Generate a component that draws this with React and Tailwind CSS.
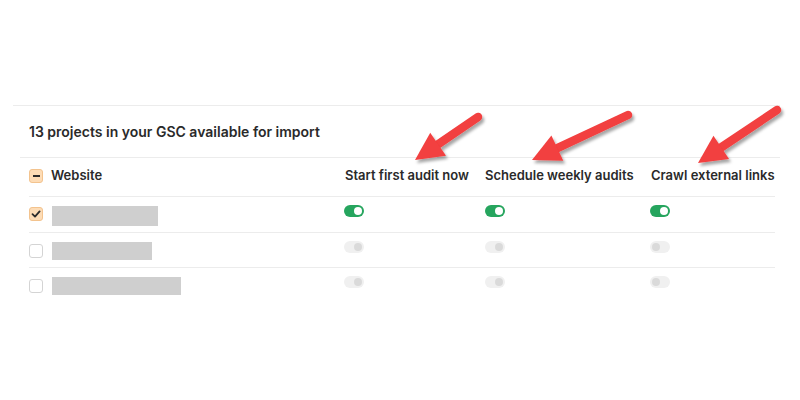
import React from "react";

function Toggle({ on, knobRight }) {
  if (on) {
    return (
      <div className="w-[20px] h-[12px] rounded-full bg-[#26a55e] flex items-center justify-end pr-[2px]">
        <div className="w-[8px] h-[8px] rounded-full bg-white" />
      </div>
    );
  }
  return (
    <div className={"w-[20px] h-[12px] rounded-full bg-[#f0f0f0] flex items-center px-[2px] " + (knobRight ? "justify-end" : "justify-start")}>
      <div className="w-[8px] h-[8px] rounded-full bg-[#dadada]" />
    </div>
  );
}

function Check({ state }) {
  if (state === "checked") {
    return (
      <div className="w-[14px] h-[14px] rounded-[3px] bg-[#fddcb6] border border-[#f3c38e] flex items-center justify-center">
        <svg width="10" height="10" viewBox="0 0 10 10">
          <path d="M1.5 5.2 L4 7.6 L8.6 2.4" fill="none" stroke="#2b2b2b" strokeWidth="1.8" strokeLinecap="round" strokeLinejoin="round" />
        </svg>
      </div>
    );
  }
  if (state === "indeterminate") {
    return (
      <div className="w-[14px] h-[14px] rounded-[3px] bg-[#fddcb6] border border-[#f3c38e] flex items-center justify-center">
        <div className="w-[7px] h-[2px] bg-[#2b2b2b]" />
      </div>
    );
  }
  return <div className="w-[14px] h-[14px] rounded-[3px] bg-white border border-[#d4d4d4]" />;
}

function arrowPoints(tail, tip, headLen, headHalf) {
  const dx = tip[0] - tail[0];
  const dy = tip[1] - tail[1];
  const len = Math.hypot(dx, dy);
  const ux = dx / len, uy = dy / len;
  const nx = -uy, ny = ux;
  const bx = tip[0] - ux * headLen, by = tip[1] - uy * headLen;
  return {
    base: [bx, by],
    poly: `${tip[0]},${tip[1]} ${bx + nx * headHalf},${by + ny * headHalf} ${bx - nx * headHalf},${by - ny * headHalf}`,
  };
}

const arrows = [
  { tail: [478, 117], tip: [415, 160] },
  { tail: [628, 115], tip: [532, 160] },
  { tail: [777, 110], tip: [698, 163] },
];

const rows = [
  { check: "checked", w: "w-[106px]", h: "h-[20px]", on: true },
  { check: "none", w: "w-[100px]", h: "h-[18px]", on: false },
  { check: "none", w: "w-[129px]", h: "h-[18px]", on: false },
];

export default function App() {
  return (
    <div className="relative w-[800px] h-[400px] bg-white overflow-hidden text-[#2a2a2a]" style={{ fontFamily: "Inter, 'Noto Sans', sans-serif" }}>
      <div className="pt-[105px] pl-[13px]">
        <div className="w-[767px] border-t border-[#ececec]">
          <div className="h-[51px] flex items-center pl-[16px] text-[14px] font-semibold">
            13 projects in your GSC available for import
          </div>
          <div className="ml-[7px] border-t border-[#ececec]">
            <div className="h-[39px] pb-[3px] ml-[9px] mr-[5px] grid grid-cols-[315px_141px_165px_1fr] items-center border-b border-[#ececec] text-[13px] font-semibold">
              <div className="flex items-center gap-[8px]">
                <Check state="indeterminate" />
                <span>Website</span>
              </div>
              <div className="pl-[1px]">Start first audit now</div>
              <div>Schedule weekly audits</div>
              <div className="pl-[1px]">Crawl external links</div>
            </div>
            {rows.map((r, i) => (
              <div
                key={i}
                className={"ml-[9px] mr-[5px] h-[35.5px] grid grid-cols-[315px_141px_165px_1fr] items-start " + (i < 2 ? "border-b border-[#ececec]" : "")}
              >
                <div className="flex items-start gap-[9px] pt-[9px]">
                  <div className={i === 0 ? "pt-[1px]" : "pt-[2px]"}>
                    <Check state={r.check} />
                  </div>
                  <div className={r.w + " " + r.h + " bg-[#cfcfcf]"} />
                </div>
                <div className="pt-[8px]"><Toggle on={r.on} knobRight /></div>
                <div className="pt-[8px]"><Toggle on={r.on} knobRight /></div>
                <div className="pt-[8px]"><Toggle on={r.on} /></div>
              </div>
            ))}
          </div>
        </div>
      </div>
      <svg className="absolute inset-0 pointer-events-none" width="800" height="400">
        <defs>
          <filter id="sh" x="-20%" y="-20%" width="140%" height="140%">
            <feDropShadow dx="2" dy="3" stdDeviation="1.6" floodColor="#000" floodOpacity="0.35" />
          </filter>
        </defs>
        {arrows.map((a, i) => {
          const p = arrowPoints(a.tail, a.tip, 28, 14);
          return (
            <g key={i} filter="url(#sh)">
              <line x1={a.tail[0]} y1={a.tail[1]} x2={p.base[0]} y2={p.base[1]} stroke="#f23f3f" strokeWidth="8.5" strokeLinecap="round" />
              <polygon points={p.poly} fill="#f23f3f" strokeLinejoin="round" />
            </g>
          );
        })}
      </svg>
    </div>
  );
}
